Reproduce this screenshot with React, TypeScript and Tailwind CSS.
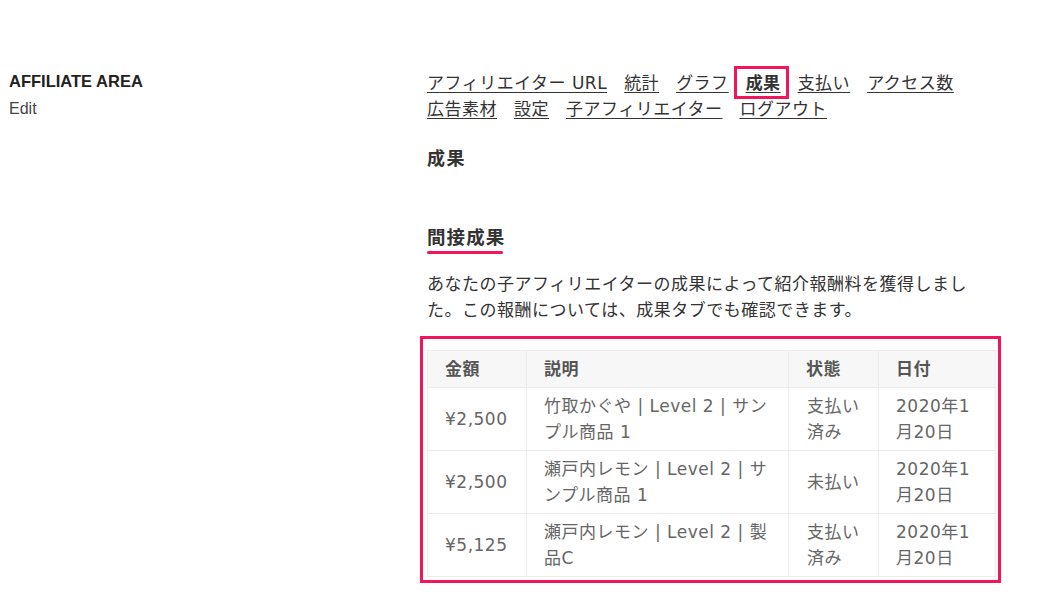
const font = {
  fontFamily: '"DejaVu Sans", "Noto Sans CJK JP", sans-serif',
};

const sideFont = {
  fontFamily: '"Liberation Sans", "Noto Sans CJK JP", sans-serif',
};

const navItems = [
  "アフィリエイター URL",
  "統計",
  "グラフ",
  "成果",
  "支払い",
  "アクセス数",
  "広告素材",
  "設定",
  "子アフィリエイター",
  "ログアウト",
];

const rows = [
  { amount: "¥2,500", desc: "竹取かぐや | Level 2 | サンプル商品 1", status: "支払い済み", date: "2020年1月20日" },
  { amount: "¥2,500", desc: "瀬戸内レモン | Level 2 | サンプル商品 1", status: "未払い", date: "2020年1月20日" },
  { amount: "¥5,125", desc: "瀬戸内レモン | Level 2 | 製品C", status: "支払い済み", date: "2020年1月20日" },
];

export default function App() {
  return (
    <div className="min-h-[605px] w-[1042px] bg-white text-[#333]" style={font}>
      <div className="flex pt-[70px]">
        {/* Left sidebar */}
        <aside className="w-[427px] pl-[9px]" style={sideFont}>
          <h2 className="text-[16.5px] font-bold leading-[22px] text-[#222]">AFFILIATE AREA</h2>
          <a className="mt-[6px] block text-[16px] leading-[22px] text-[#444]">Edit</a>
        </aside>

        {/* Main content */}
        <main className="w-[568px]">
          <nav className="flex flex-wrap gap-x-[17px] text-[17px] leading-[26px] tracking-[0.5px] text-[#333]">
            {navItems.map((item) => (
              <span key={item} className="relative">
                <a className={"underline underline-offset-[3px] decoration-1 " + (item === "成果" ? "font-bold" : "")}>
                  {item}
                </a>
                {item === "成果" && (
                  <span className="pointer-events-none absolute -left-[12px] -right-[8px] -top-[4px] -bottom-[3px] border-[3px] border-[#f2155c]" />
                )}
              </span>
            ))}
          </nav>

          <h3 className="mt-[24px] text-[18px] font-bold leading-[26px] tracking-[0.08em] text-[#333]">成果</h3>

          <h4 className="mt-[52px] inline-block text-[18.5px] font-bold leading-[28px] tracking-[0.06em] text-[#333]">
            間接成果
            <div className="mt-[-1px] h-[3px] w-[76px] rounded-full bg-[#f2155c]" />
          </h4>

          <p className="mt-[17px] text-[17px] leading-[26px] tracking-[0.5px] text-[#333]">
            あなたの子アフィリエイターの成果によって紹介報酬料を獲得しました。この報酬については、成果タブでも確認できます。
          </p>

          {/* Referrals table */}
          <div className="-ml-[7px] mt-[13px] w-[581px] border-[3px] border-[#f2155c] px-[4px] pt-[11px] pb-[3px]">
            <table className="w-[568px] table-fixed border-collapse text-[17px] leading-[26px] tracking-[0.5px] text-[#666]">
              <colgroup>
                <col className="w-[99px]" />
                <col className="w-[262px]" />
                <col className="w-[90px]" />
                <col className="w-[117px]" />
              </colgroup>
              <thead>
                <tr className="bg-[#f7f7f7]">
                  {["金額", "説明", "状態", "日付"].map((h) => (
                    <th
                      key={h}
                      className="border border-[#ececec] px-[17px] py-[5px] text-left font-bold text-[#555]"
                    >
                      {h}
                    </th>
                  ))}
                </tr>
              </thead>
              <tbody>
                {rows.map((r, i) => (
                  <tr key={i}>
                    <td className="border border-[#ececec] px-[17px] py-[5px] align-middle">{r.amount}</td>
                    <td className="border border-[#ececec] px-[17px] py-[5px] align-middle">{r.desc}</td>
                    <td className="border border-[#ececec] px-[18px] py-[5px] align-middle">{r.status}</td>
                    <td className="border border-[#ececec] px-[17px] py-[5px] align-middle">{r.date}</td>
                  </tr>
                ))}
              </tbody>
            </table>
          </div>
        </main>
      </div>
    </div>
  );
}
